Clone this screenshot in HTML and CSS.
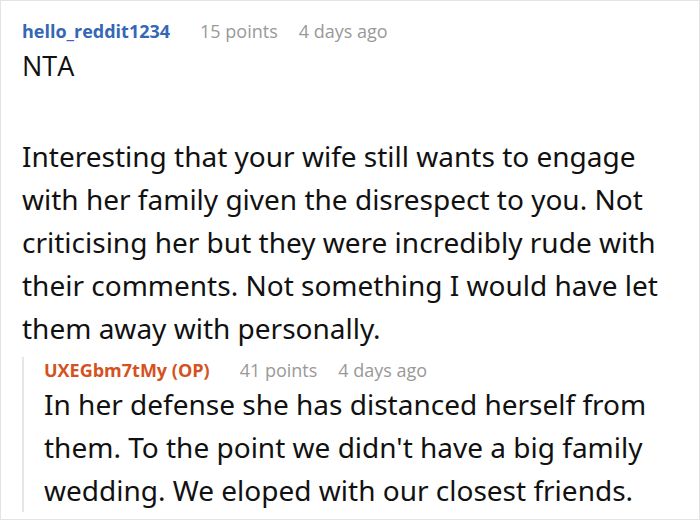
FILE: index.html
```html
<!DOCTYPE html>
<html>
<head>
<meta charset="utf-8">
<link rel="stylesheet" href="styles.css">
</head>
<body>
<div class="frame">
  <div class="comment">
    <div class="meta">
      <span class="user">hello_reddit1234</span>
      <span class="info">15 points</span>
      <span class="info">4 days ago</span>
    </div>
    <p class="text nta">NTA</p>
    <p class="text body">Interesting that your wife still wants to engage with her family given the disrespect to you. Not criticising her but they were incredibly rude with their comments. Not something I would have let them away with personally.</p>
    <div class="reply">
      <div class="meta">
        <span class="user op">UXEGbm7tMy (OP)</span>
        <span class="info">41 points</span>
        <span class="info">4 days ago</span>
      </div>
      <p class="text body">In her defense she has distanced herself from them. To the point we didn't have a big family wedding. We eloped with our closest friends.</p>
    </div>
  </div>
</div>
</body>
</html>
```
FILE: styles.css
```css
html, body {
  margin: 0;
  padding: 0;
  background: #fff;
}
.frame {
  width: 700px;
  height: 520px;
  box-sizing: border-box;
  border: 1px solid #e3e3e3;
  overflow: hidden;
}
.comment {
  padding: 17px 25px 0 21px;
}
.meta {
  display: flex;
  gap: 21px;
  font-family: "Open Sans", "Noto Sans", sans-serif;
  font-size: 18px;
  line-height: 26px;
}
.user {
  font-weight: 700;
  color: #3567b5;
  margin-right: 9px;
}
.user.op {
  color: #d4521f;
}
.info {
  color: #999;
}
.text {
  margin: 0;
  color: #111;
}
.nta {
  font-family: "Open Sans", "Noto Sans", sans-serif;
  font-size: 27px;
  line-height: 40px;
  margin-top: 2px;
}
.body {
  font-family: "Noto Sans", "Open Sans", sans-serif;
  font-size: 28px;
  line-height: 43px;
}
.comment > .body {
  margin-top: 49px;
}
.reply {
  margin-top: 7px;
  border-left: 2px solid #e6e6e6;
  padding-left: 20px;
}
```
